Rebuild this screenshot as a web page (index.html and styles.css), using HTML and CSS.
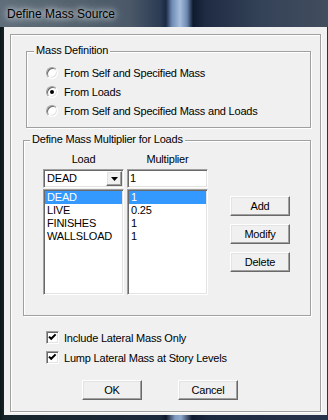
FILE: index.html
```html
<!DOCTYPE html>
<html lang="en">
<head>
    <meta charset="UTF-8">
    <title>Define Mass Source</title>
    <link rel="stylesheet" href="styles.css">
</head>
<body>
    <div class="window">
        <div class="titlebar">
            <span class="title">Define Mass Source</span>
        </div>
        <div class="client">
            <div class="panel">
                <div class="group group-mass">
                    <span class="group-title">Mass Definition</span>
                    <div class="radio-row"><span class="radio"></span>From Self and Specified Mass</div>
                    <div class="radio-row"><span class="radio checked"></span>From Loads</div>
                    <div class="radio-row"><span class="radio"></span>From Self and Specified Mass and Loads</div>
                </div>

                <div class="group group-mult">
                    <span class="group-title">Define Mass Multiplier for Loads</span>
                    <div class="mult-body">
                        <div class="col">
                            <div class="col-head">Load</div>
                            <div class="combo sunken">
                                <span class="combo-text">DEAD</span>
                                <span class="combo-btn raised">
                                    <svg width="7" height="4" viewBox="0 0 7 4"><polygon points="0,0 7,0 3.5,4" fill="#000"/></svg>
                                </span>
                            </div>
                            <ul class="list sunken">
                                <li class="selected">DEAD</li>
                                <li>LIVE</li>
                                <li>FINISHES</li>
                                <li>WALLSLOAD</li>
                            </ul>
                        </div>
                        <div class="col col-mult">
                            <div class="col-head">Multiplier</div>
                            <div class="textbox sunken">1</div>
                            <ul class="list sunken">
                                <li class="selected">1</li>
                                <li>0.25</li>
                                <li>1</li>
                                <li>1</li>
                            </ul>
                        </div>
                        <div class="side-buttons">
                            <button class="btn raised">Add</button>
                            <button class="btn raised">Modify</button>
                            <button class="btn raised">Delete</button>
                        </div>
                    </div>
                </div>

                <div class="checks">
                    <div class="check-row">
                        <span class="checkbox sunken">
                            <svg width="9" height="9" viewBox="0 0 9 9"><polyline points="1,3.6 3.2,5.8 7.6,1.4" fill="none" stroke="#000" stroke-width="2"/></svg>
                        </span>
                        Include Lateral Mass Only
                    </div>
                    <div class="check-row">
                        <span class="checkbox sunken">
                            <svg width="9" height="9" viewBox="0 0 9 9"><polyline points="1,3.6 3.2,5.8 7.6,1.4" fill="none" stroke="#000" stroke-width="2"/></svg>
                        </span>
                        Lump Lateral Mass at Story Levels
                    </div>
                </div>

                <div class="actions">
                    <button class="btn raised">OK</button>
                    <button class="btn raised">Cancel</button>
                </div>
            </div>
        </div>
    </div>
</body>
</html>
```

FILE: styles.css
```css
body {
    margin: 0;
    font-family: "Liberation Sans", Arial, sans-serif;
    font-size: 11px;
    letter-spacing: -0.2px;
    color: #000;
}
.window {
    width: 328px;
    height: 420px;
    display: flex;
    flex-direction: column;
    background: linear-gradient(90deg, #0b1719 0, #15242a 4px, #1c2a3e 160px, #0c1628 166px, #7f9ac0 175px, #8fa8cc 181px, #0e1a2e 192px, #1c2a40 210px, #26334a 328px);
}
.titlebar {
    flex: none;
    height: 27px;
    display: flex;
    align-items: center;
    padding-left: 7px;
    background: linear-gradient(90deg, #5f6d7a 0, #56646f 60px, #4a5868 130px, #2c3c54 160px, #1a2a44 166px, #6f8cb6 172px, #a6bddc 180px, #6d89b2 187px, #0e1a2e 193px, #1e2b42 205px, #344258 260px, #424d5e 328px);
}
.title {
    font-size: 12px;
    letter-spacing: 0;
    color: #000;
    text-shadow: 0 0 5px rgba(225, 232, 238, 0.9), 0 0 9px rgba(225, 232, 238, 0.8), 0 0 12px rgba(225, 232, 238, 0.6);
}
.client {
    flex: none;
    margin-left: 4px;
    width: 323px;
    height: 388px;
    box-sizing: border-box;
    padding: 7px 0 0 6px;
    background: #f0f0f0;
}
.panel {
    width: 311px;
    height: 378px;
    box-sizing: border-box;
    border: 1px solid #a0a0a0;
    box-shadow: inset 1px 1px 0 #fff, 1px 1px 0 #fff;
}

/* group boxes */
.group {
    position: relative;
    box-sizing: border-box;
    border: 1px solid #a0a0a0;
    box-shadow: inset 1px 1px 0 #fff, 1px 1px 0 #fff;
}
.group-title {
    position: absolute;
    top: -8px;
    left: 7px;
    padding: 0 2px;
    line-height: 13px;
    background: #f0f0f0;
    white-space: nowrap;
}
.group-mass {
    margin: 16px 0 0 15px;
    width: 285px;
    height: 77px;
    padding-top: 11px;
}
.group-mult {
    margin: 12px 0 0 12px;
    width: 288px;
    height: 176px;
}
.group-mult .group-title {
    left: 6px;
}

/* radios */
.radio-row {
    display: flex;
    align-items: center;
    height: 19px;
    padding-left: 19px;
    white-space: nowrap;
}
.radio {
    position: relative;
    width: 12px;
    height: 12px;
    box-sizing: border-box;
    margin-right: 6px;
    border: 1px solid;
    border-color: #a0a0a0 #fff #fff #a0a0a0;
    border-radius: 50%;
    background: #fff;
    box-shadow: inset 1px 1px 0 #696969, inset -1px -1px 0 #e3e3e3;
}
.radio.checked::after {
    content: "";
    position: absolute;
    left: 3px;
    top: 3px;
    width: 4px;
    height: 4px;
    border-radius: 50%;
    background: #000;
}

/* load table */
.mult-body {
    display: flex;
    padding: 12px 0 0 19px;
}
.col {
    width: 81px;
}
.col-mult {
    margin-left: 3px;
}
.col-head {
    line-height: 13px;
    text-align: center;
}
.sunken {
    box-sizing: border-box;
    border: 1px solid;
    border-color: #a0a0a0 #fff #fff #a0a0a0;
    box-shadow: inset 1px 1px 0 #696969, inset -1px -1px 0 #e3e3e3;
    background: #fff;
}
.raised {
    box-sizing: border-box;
    border: 1px solid;
    border-color: #fff #696969 #696969 #fff;
    box-shadow: inset -1px -1px 0 #a0a0a0, inset 1px 1px 0 #e3e3e3;
    background: #f0f0f0;
}
.combo {
    margin-top: 3px;
    height: 19px;
    padding: 1px;
    display: flex;
    align-items: center;
}
.combo-text {
    flex: 1;
    padding-left: 2px;
    line-height: 15px;
}
.combo-btn {
    width: 16px;
    height: 15px;
    display: flex;
    align-items: center;
    justify-content: center;
    padding-top: 1px;
}
.textbox {
    margin-top: 3px;
    height: 19px;
    padding: 1px 1px 1px 2px;
    line-height: 15px;
}
.list {
    margin: 1px 0 0;
    height: 106px;
    padding: 1px;
    list-style: none;
}
.list li {
    line-height: 13px;
    padding-left: 2px;
}
.list li.selected {
    background: #3399ff;
    color: #fff;
}
.side-buttons {
    display: flex;
    flex-direction: column;
    gap: 8px;
    margin: 43px 0 0 22px;
}
.btn {
    width: 60px;
    height: 20px;
    padding: 0;
    font-family: inherit;
    font-size: 11px;
    letter-spacing: -0.2px;
    color: #000;
    line-height: 16px;
}

/* checkboxes and dialog buttons */
.checks {
    display: flex;
    flex-direction: column;
    gap: 7px;
    margin: 15px 0 0 35px;
}
.check-row {
    display: flex;
    align-items: center;
    height: 13px;
    white-space: nowrap;
}
.checkbox {
    width: 13px;
    height: 13px;
    margin-right: 5px;
    display: flex;
    align-items: center;
    justify-content: center;
}
.actions {
    display: flex;
    gap: 36px;
    margin: 16px 0 0 71px;
}
```
